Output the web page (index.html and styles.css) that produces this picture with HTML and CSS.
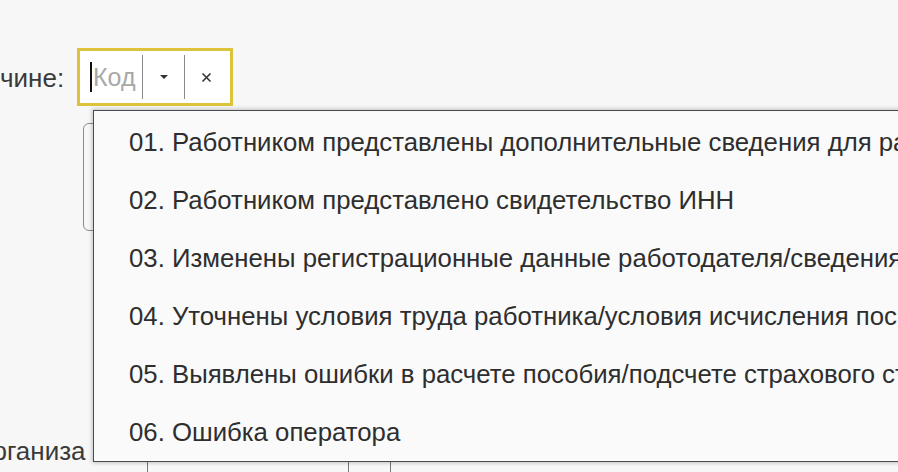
FILE: index.html
```html
<!DOCTYPE html>
<html lang="ru">
<head>
<meta charset="utf-8">
<link rel="stylesheet" href="styles.css">
</head>
<body>
<div class="page">
  <div class="row-top">
    <span class="label">чине:</span>
    <div class="field focus">
      <div class="input"><span class="caret"></span><span class="placeholder">Код</span></div>
      <div class="sep"></div>
      <div class="btn"><svg width="10" height="6" viewBox="0 0 10 6"><path d="M1 1h8L5 5z" fill="#333"/></svg></div>
      <div class="sep"></div>
      <div class="btn close"><svg width="11" height="11" viewBox="0 0 11 11"><path d="M1.5 1.5l8 8M9.5 1.5l-8 8" stroke="#333" stroke-width="1.6"/></svg></div>
    </div>
  </div>
  <div class="memo"></div>
  <div class="row-bottom">
    <span class="label cut">организа</span>
    <div class="field2">
      <div class="f2-main"></div>
      <div class="f2-part"></div>
      <div class="f2-part"></div>
    </div>
  </div>
</div>
<div class="dropdown">
  <div class="item">01. Работником представлены дополнительные сведения для расчета пособия</div>
  <div class="item">02. Работником представлено свидетельство ИНН</div>
  <div class="item">03. Изменены регистрационные данные работодателя/сведения о банке</div>
  <div class="item">04. Уточнены условия труда работника/условия исчисления пособия</div>
  <div class="item">05. Выявлены ошибки в расчете пособия/подсчете страхового стажа</div>
  <div class="item">06. Ошибка оператора</div>
</div>
</body>
</html>
```
FILE: styles.css
```css
html, body {
  margin: 0;
  padding: 0;
}
body {
  width: 898px;
  height: 472px;
  overflow: hidden;
  background: #f7f7f7;
  font-family: "Liberation Sans", Arial, sans-serif;
  color: #333;
  position: relative;
}
.page {
  padding-top: 48px;
}
.row-top {
  display: flex;
  align-items: center;
  height: 58px;
}
.label {
  font-size: 26px;
  width: 77px;
  flex: none;
  white-space: nowrap;
  color: #3a3a3a;
  padding-top: 2px;
}
.field {
  box-sizing: border-box;
  width: 156px;
  height: 58px;
  background: #fff;
  border: 3px solid #dcc43a;
  display: flex;
  align-items: center;
}
.input {
  width: 62px;
  display: flex;
  align-items: center;
  padding-left: 10px;
  box-sizing: border-box;
}
.caret {
  width: 2px;
  height: 30px;
  background: #111;
}
.placeholder {
  font-size: 25px;
  color: #a8a8a8;
  margin-left: 1px;
}
.sep {
  width: 1px;
  height: 44px;
  background: #8a8a8a;
}
.btn {
  width: 41px;
  display: flex;
  justify-content: center;
  align-items: center;
}
.close {
  width: 42px;
}
.memo {
  margin-left: 83px;
  margin-top: 17px;
  width: 300px;
  height: 108px;
  border: 1px solid #8c8c8c;
  border-radius: 6px;
  box-sizing: border-box;
}
.row-bottom {
  margin-top: 207px;
  display: flex;
  align-items: flex-end;
  height: 36px;
}
.cut {
  margin-left: -22px;
  width: 169px;
  line-height: 30px;
  align-self: flex-start;
  padding-top: 0;
  margin-top: -2px;
}
.field2 {
  display: flex;
  height: 36px;
}
.f2-main {
  width: 200px;
  border-left: 1px solid #777;
}
.f2-part {
  width: 41px;
  border-left: 1px solid #777;
}
.dropdown {
  position: absolute;
  left: 93px;
  top: 110px;
  width: 840px;
  box-sizing: border-box;
  padding-top: 2px;
  height: 352px;
  background: #fafafa;
  border: 1px solid #4a4a4a;
  box-shadow: 0 0 4px 1px rgba(0, 0, 0, 0.22);
}
.item {
  height: 58px;
  line-height: 58px;
  padding-left: 35px;
  font-size: 25.75px;
  white-space: nowrap;
  color: #2e2e2e;
}
```
